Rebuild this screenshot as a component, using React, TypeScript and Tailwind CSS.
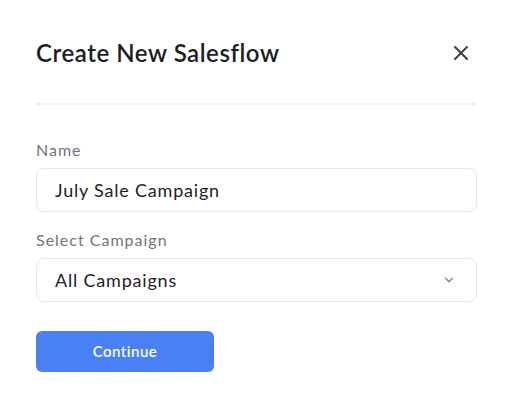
import { X, ChevronDown } from "lucide-react";

export default function App() {
  return (
    <div className="min-h-screen bg-white font-['Lato','Noto_Sans',sans-serif] px-9 pt-[37px]">
      <div className="flex items-center justify-between">
        <h1 className="text-[24px] leading-8 font-semibold tracking-[0.55px] text-[#1c1e25]">
          Create New Salesflow
        </h1>
        <button type="button" className="mr-[4px] text-[#3b3e46]">
          <X size={24} strokeWidth={2} />
        </button>
      </div>

      <div className="mt-[34px] h-[2px] w-full bg-[#efeff1]" />

      <div className="mt-[35px]">
        <label className="block text-[16px] leading-5 tracking-[1px] text-[#71747c]">Name</label>
        <div className="mt-2 flex h-11 items-center rounded-lg border border-[#e7e8ec] pl-[18px]">
          <span className="text-[18px] tracking-[0.8px] text-[#1f2128]">July Sale Campaign</span>
        </div>
      </div>

      <div className="mt-[18px]">
        <label className="block text-[16px] leading-5 tracking-[1px] text-[#71747c]">
          Select Campaign
        </label>
        <div className="mt-2 flex h-11 items-center justify-between rounded-lg border border-[#e7e8ec] pl-[18px] pr-5">
          <span className="text-[18px] tracking-[0.8px] text-[#1f2128]">All Campaigns</span>
          <ChevronDown size={14} strokeWidth={2} className="text-[#7a7d85]" />
        </div>
      </div>

      <button
        type="button"
        className="mt-[29px] h-[41px] w-[178px] rounded-md bg-[#4a80f5] text-[15px] font-semibold tracking-[0.5px] text-white"
      >
        Continue
      </button>
    </div>
  );
}
